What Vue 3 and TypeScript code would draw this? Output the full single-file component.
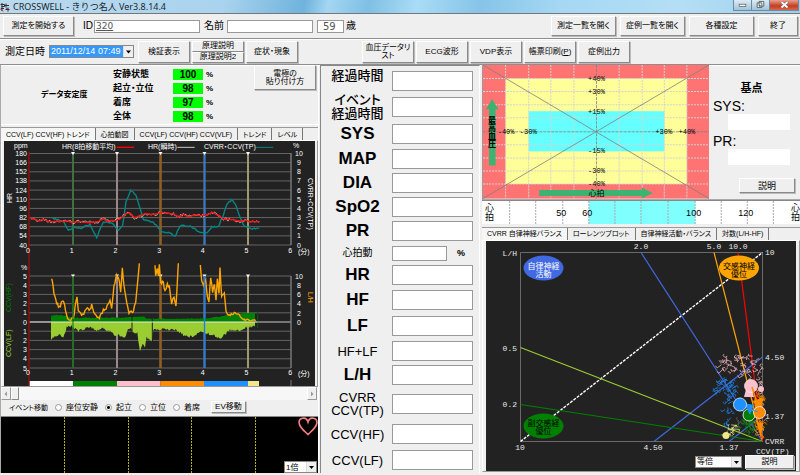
<script setup lang="ts">
import { ref } from 'vue'

type Point = [number, number]

interface Measure {
  label: string[]
  kind: string
  size?: string
  unit?: string
}

const seeded = (seed: number) => () => {
  seed = (seed * 1103515245 + 12345) % 2147483648
  return seed / 2147483648
}

// Parses "x,y x,y" anchors
const parse = (text: string): Point[] =>
  text.split(' ').map((pair) => pair.split(',').map(Number) as Point)

// Resamples a line at a fixed step and adds small measurement noise
const wiggle = (text: string, amp: number, step = 3, seed = 7): string => {
  const anchors = parse(text)
  const rand = seeded(seed)
  const out: string[] = []
  for (let i = 0; i < anchors.length - 1; i++) {
    const [x1, y1] = anchors[i]
    const [x2, y2] = anchors[i + 1]
    const n = Math.max(1, Math.round(Math.abs(x2 - x1) / step))
    for (let k = 0; k < n; k++) {
      const t = k / n
      const noise = (rand() - 0.5) * 2 * amp
      out.push(`${(x1 + (x2 - x1) * t).toFixed(1)},${(y1 + (y2 - y1) * t + noise).toFixed(1)}`)
    }
  }
  const last = anchors[anchors.length - 1]
  out.push(`${last[0]},${last[1]}`)
  return out.join(' ')
}

// Short zigzag strokes spread around a path, used for beat-by-beat scatter
const scatter = (text: string, spread: number, perLeg: number, seed: number): string => {
  const anchors = parse(text)
  const rand = seeded(seed)
  let d = ''
  for (let i = 0; i < anchors.length - 1; i++) {
    for (let k = 0; k < perLeg; k++) {
      const t = k / perLeg
      const x = anchors[i][0] + (anchors[i + 1][0] - anchors[i][0]) * t + (rand() - 0.5) * spread
      const y = anchors[i][1] + (anchors[i + 1][1] - anchors[i][1]) * t + (rand() - 0.5) * spread
      const dx = (rand() - 0.5) * 10
      const dy = (rand() - 0.5) * 8
      d += `M${x.toFixed(1)} ${y.toFixed(1)}l${dx.toFixed(1)} ${dy.toFixed(1)}l${(-dy / 2).toFixed(1)} ${(dx / 2).toFixed(1)}`
    }
  }
  return d
}

const patientId = ref('320')
const patientName = ref('')
const age = ref('59')
const position = ref('起立')
const positions = ['座位安静', '起立', '立位', '着席']

const stability = [
  { name: '安静状態', value: 100 },
  { name: '起立・立位', value: 98 },
  { name: '着席', value: 97 },
  { name: '全体', value: 98 },
]

const measures: Measure[] = [
  { label: ['経過時間'], kind: 'jp raised' },
  { label: ['イベント', '経過時間'], kind: 'jp', size: 'double' },
  { label: ['SYS'], kind: 'strong', size: 'roomy' },
  { label: ['MAP'], kind: 'strong' },
  { label: ['DIA'], kind: 'strong' },
  { label: ['SpO2'], kind: 'strong' },
  { label: ['PR'], kind: 'strong' },
  { label: ['心拍動'], kind: 'small', size: 'short', unit: '%' },
  { label: ['HR'], kind: 'strong' },
  { label: ['HF'], kind: 'strong', size: 'roomy' },
  { label: ['LF'], kind: 'strong', size: 'roomy' },
  { label: ['HF+LF'], kind: 'plain' },
  { label: ['L/H'], kind: 'strong' },
  { label: ['CVRR', 'CCV(TP)'], kind: 'plain', size: 'tall' },
  { label: ['CCV(HF)'], kind: 'plain', size: 'roomy' },
  { label: ['CCV(LF)'], kind: 'plain', size: 'roomy' },
]

const trendTabs = ['CCV(LF) CCV(HF) トレンド', '心拍動図', 'CCV(LF) CCV(HF) CCV(VLF)', 'トレンド', 'レベル']
const balanceTabs = ['CVRR 自律神経バランス', 'ローレンツプロット', '自律神経活動・バランス', '対数(L/H-HF)']

const steps = Array.from({ length: 11 }, (_, i) => i)
const minutes = [0, 1, 2, 3, 4, 5, 6]
const events = [
  { x: 73, color: '#0a6a0a', w: 1 },
  { x: 117, color: '#c09aa0', w: 1 },
  { x: 160.5, color: '#9a5a10', w: 2 },
  { x: 204.5, color: '#1e80f0', w: 1.4 },
  { x: 248, color: '#c8bc6c', w: 1 },
]
const phases = [
  { x: 29, w: 44, color: '#ffffff' },
  { x: 73, w: 44, color: '#008000' },
  { x: 117, w: 43.5, color: '#ffc0cb' },
  { x: 160.5, w: 43.5, color: '#ff8c00' },
  { x: 204, w: 44, color: '#1e90ff' },
  { x: 248, w: 11, color: '#f0e68c' },
]

const hrAnchors =
  '88,277 118,288 130,282 145,290 180,289 205,288 215,293 240,290 265,293 295,290 310,281 320,288 345,287 362,280 375,268 388,262 403,278 425,272 435,267 460,268 485,263 520,267 535,276 550,268 565,275 585,270 615,272 635,262 655,270 668,282 700,285 720,289 735,286 750,290 778,290'
const hrMean = wiggle(hrAnchors, 1.2, 4, 3)
const hrBeat = wiggle(hrAnchors, 5, 4, 11)
const cvrr = wiggle(
  '155,278 190,290 205,316 225,308 240,311 270,298 290,337 310,290 335,294 355,316 368,300 378,230 392,197 407,208 425,265 430,283 460,292 485,320 510,323 525,335 540,302 555,302 575,305 600,323 620,325 635,305 655,305 670,270 680,238 695,224 705,235 715,265 730,300 760,312 778,310',
  2, 4, 5,
)
const lhLines = [
  wiggle('155,85 157,95 162,130 170,160 178,172 190,150 200,195 205,208 212,212 220,205 225,175 231,140 235,180 245,198 258,180 262,172 270,178 275,165 285,195 298,205 310,180 318,175 325,165 330,150 335,172 342,105 350,75 358,90 362,128 367,55 372,105 380,160 387,186 400,182 407,160 411,120 418,40', 5, 3, 9),
  wiggle('465,50 467,75 472,55 475,80 478,42 482,95 490,100 495,125 502,105 508,110 515,160 522,140 528,168 535,40', 5, 3, 4),
  wiggle('601,48 605,90 610,110 617,90 622,140 627,152 632,80 638,130 643,100 648,150 652,90 657,130 660,55 665,140 673,130 678,185 685,195 700,190 715,192 730,210 745,208 767,212', 4, 3, 8),
]
const hfArea =
  '153,216 ' + wiggle('153,198 170,194 200,198 220,203 350,203 430,200 440,206 600,206 660,200 700,192 740,188 765,188', 1.5, 4, 2) + ' 765,216'
const lfArea =
  '153,216 ' + wiggle('153,270 158,262 180,255 190,262 200,232 215,228 235,245 245,238 270,232 290,240 310,235 330,245 345,255 375,260 385,238 395,238 398,245 412,250 420,305 428,285 435,292 440,262 455,278 460,238 530,240 550,255 580,262 600,245 640,255 660,265 690,240 720,242 735,232 765,230', 4, 3, 6) + ' 765,216'

const bpColumns = [505.5, 528.5, 550.5, 573.5, 618.5, 641.5, 663.5, 686]
const bpRows = [78.5, 91.5, 104.5, 117.5, 144.5, 157.5, 170.5, 183.5]
const bpLabels = [
  { x: 596, y: 80.5, t: '+40%' },
  { x: 596, y: 93.5, t: '+30%' },
  { x: 596, y: 113.5, t: '+15%' },
  { x: 596, y: 152.5, t: '-15%' },
  { x: 596, y: 172.5, t: '-30%' },
  { x: 596, y: 185.5, t: '-40%' },
  { x: 506, y: 133.5, t: '-40%' },
  { x: 528, y: 133.5, t: '-30%' },
  { x: 663, y: 133.5, t: '+30%' },
  { x: 686, y: 133.5, t: '+40%' },
]
const rateTicks = [509.5, 535.5, 562.5, 588.5, 614.5, 640.5, 667.5, 694.5, 720.5, 746.5, 772.5]
const rateLabels = [
  { x: 561, t: '50' },
  { x: 587, t: '60' },
  { x: 693, t: '100' },
  { x: 745, t: '120' },
]

const clouds = [
  { color: '#e8b0ba', d: scatter('719,363 728,358 724,370 742,371 748,375 734,358 750,359 759,366 760,380 761,392', 6, 7, 21) },
  { color: '#1e80e0', d: scatter('710,389 724,389 720,379 728,382 731,392 728,399 733,384 727,404 731,414 727,432', 6, 7, 33) },
  { color: '#606060', d: scatter('735,428 743,420 748,430 755,422', 6, 6, 12) },
  { color: '#008000', d: scatter('742,426 749,415 754,432 746,428 752,420', 6, 10, 45) },
  { color: '#ff8c00', d: scatter('757,404 761,396 758,412 760,424 761,436', 3, 16, 51) },
  { color: '#f0e68c', d: scatter('727,436 734,429 729,426', 4, 8, 63) },
  { color: '#e01010', d: scatter('753,398 758,402', 4, 4, 71) },
]
</script>

<template>
  <div class="window">
    <header class="titlebar">
      <svg class="app-icon" viewBox="0 0 10 10" aria-hidden="true">
        <path d="M0.5 2.5h4v2h-3M1 6.5h3M2 1v8M5 3.5h4M6 1.5v4M5.500 7.500h4M8 5.500v4" stroke="#333" fill="none" />
        <path d="M0 6.500l3 3M6 6l2 1" stroke="#d02020" />
      </svg>
      <h1>CROSSWELL - きりつ名人 Ver3.8.14.4</h1>
      <div class="caption-buttons">
        <button type="button" aria-label="最小化"><svg viewBox="0 0 18 10"><rect x="5.500" y="4.500" width="7" height="2.500" fill="#fff" stroke="#566" stroke-width=".8" /></svg></button>
        <button type="button" aria-label="元に戻す"><svg viewBox="0 0 18 10"><path d="M7.500 1.500h5v5h-5zM5.500 3h5v5h-5z" fill="#fff" stroke="#566" /><path d="M7.500 5h1.500v1.500h-1.500z" fill="#566" /></svg></button>
        <button type="button" class="close" aria-label="閉じる"><svg viewBox="0 0 28 10"><path d="M11.500 2l6 5.500M17.500 2l-6 5.500" stroke="#755" stroke-width="3" /><path d="M11.500 2l6 5.500M17.500 2l-6 5.500" stroke="#fff" stroke-width="1.800" /></svg></button>
      </div>
    </header>

    <div class="toolbar first">
      <button type="button" class="btn start">測定を開始する</button>
      <label class="field id">ID<input v-model="patientId" type="text" /></label>
      <label class="field name">名前<input v-model="patientName" type="text" /></label>
      <label class="field age"><input v-model="age" type="text" />歳</label>
      <div class="right-buttons">
        <button type="button" class="btn wide">測定一覧を開く</button>
        <button type="button" class="btn wide">症例一覧を開く</button>
        <button type="button" class="btn wide">各種設定</button>
        <button type="button" class="btn exit">終了</button>
      </div>
    </div>

    <div class="toolbar second">
      <label class="when" for="measured-at">測定日時</label>
      <span class="combo date">
        <select id="measured-at"><option>2011/12/14 07:49</option></select>
        <svg viewBox="0 0 9 9"><path d="M2 3.500h5L4.500 6.500z" /></svg>
      </span>
      <button type="button" class="btn tool">検証表示</button>
      <div class="stack">
        <button type="button" class="btn">原理説明</button>
        <button type="button" class="btn">原理説明2</button>
      </div>
      <button type="button" class="btn tool">症状・現象</button>
      <div class="reports">
        <button type="button" class="btn tool">血圧データリスト</button>
        <button type="button" class="btn tool">ECG波形</button>
        <button type="button" class="btn tool">VDP表示</button>
        <button type="button" class="btn tool">帳票印刷(<u>P</u>)</button>
        <button type="button" class="btn tool">症例出力</button>
      </div>
    </div>

    <main class="columns">
      <section class="left">
        <div class="stability">
          <h2>データ安定度</h2>
          <dl>
            <div v-for="s in stability" :key="s.name">
              <dt>{{ s.name }}</dt>
              <dd><b>{{ s.value }}</b><span>%</span></dd>
            </div>
          </dl>
          <button type="button" class="btn electrode">電極の<br />貼り付け方</button>
        </div>

        <div class="tabs" role="tablist">
          <button v-for="(t, i) in trendTabs" :key="t" type="button" role="tab" :aria-selected="i === 0">{{ t }}</button>
        </div>
        <div class="frame">
          <svg class="chart" viewBox="4 141 311 245" role="img" aria-label="トレンド">
            <rect x="4" y="141" width="311" height="245" fill="#222" />
            <g stroke="#646464">
              <line v-for="i in steps" :key="'u' + i" x1="29" x2="291" :y1="153.500 + i * 9.150" :y2="153.500 + i * 9.150" />
              <line v-for="i in steps" :key="'l' + i" x1="29" x2="291" :y1="276 + i * 9.200" :y2="276 + i * 9.200" />
            </g>
            <path d="M291 153V245M291 276V368" stroke="#777" stroke-width="1.500" />
            <path d="M291 380V386" stroke="#777" />
            <g v-for="e in events" :key="e.x">
              <path :d="`M${e.x} 153V245M${e.x} 276V368`" stroke="#777" stroke-width="2" />
              <path :d="`M${e.x} 153V245M${e.x} 276V368`" :stroke="e.color" :stroke-width="e.w" />
              <path :d="`M${e.x - 2} 152h4l-2 3zM${e.x - 2} 274.500h4l-2 3z`" fill="#fff" />
            </g>

            <g class="scaled" transform="translate(0 125) scale(.33333)">
              <polyline :points="cvrr" class="bold" stroke="#078484" />
              <polyline :points="hrBeat" stroke="#b8b8b8" />
              <polyline :points="hrMean" class="bold" stroke="#ff1010" />
              <path d="M350 67h52" class="bold" stroke="#f00" />
              <path d="M532 67h52" stroke="#c8c8c8" />
              <path d="M768 67h52" stroke="#078484" />
            </g>
            <g class="scaled" transform="translate(0 250) scale(.33333)">
              <polygon :points="hfArea" fill="#008000" />
              <polygon :points="lfArea" fill="#9acd32" />
              <path d="M396 200v45M457 205v72" stroke="#222" />
              <path d="M773 184v50" stroke="#0a5a0a" />
              <path d="M88 216h684" stroke="#e8e8e8" />
              <path d="M772 216h100" stroke="#aaa" />
              <polyline v-for="(l, i) in lhLines" :key="i" :points="l" stroke="#ffa500" class="bold" />
            </g>
            <path d="M73 276V368" stroke="#0a6a0a" />
            <path d="M204.500 276V368" stroke="#1e80f0" stroke-width="1.400" />
            <rect v-for="p in phases" :key="p.x" :x="p.x" y="381" :width="p.w" height="5" :fill="p.color" />
            <path d="M29 152V386" stroke="#8a1212" stroke-width="1.500" />

            <g class="tick">
              <text v-for="i in steps" :key="'a' + i" x="27" :y="156 + i * 9.150" text-anchor="end">{{ 180 - i * 14 }}</text>
              <text v-for="i in steps" :key="'b' + i" x="299" :y="156 + i * 9.150" text-anchor="middle">{{ 10 - i }}</text>
              <text v-for="i in steps" :key="'c' + i" x="27" :y="278.500 + i * 9.200" text-anchor="end">{{ Math.abs(5 - i) }}</text>
              <text v-for="i in 6" :key="'d' + i" x="299" :y="269.500 + i * 9.200" text-anchor="middle">{{ 12 - i * 2 }}</text>
              <g v-for="m in minutes" :key="'m' + m">
                <text :x="28 + m * 43.700" y="253" text-anchor="middle">{{ m }}</text>
                <text :x="28 + m * 43.700" y="375" text-anchor="middle">{{ m }}</text>
              </g>
              <text x="14" y="148">ppm</text>
              <text x="293" y="148">%</text>
              <text x="21" y="270">%</text>
              <text x="298" y="254">(分)</text>
              <text x="298" y="376">(分)</text>
              <text x="62" y="149">HR(8拍移動平均)</text>
              <text x="148" y="149">HR(瞬時)</text>
              <text x="204" y="149">CVRR・CCV(TP)</text>
              <text transform="translate(12 203) rotate(-90)">HR</text>
              <text transform="translate(308 178) rotate(90)">CVRR・CCV(TP)</text>
              <text transform="translate(11 312) rotate(-90)" class="hf">CCV(HF)</text>
              <text transform="translate(11 357) rotate(-90)" class="lf">CCV(LF)</text>
              <text transform="translate(308 292) rotate(90)" class="lh">L/H</text>
            </g>
          </svg>
        </div>
        <div class="scroll">
          <button type="button" aria-label="左へ"><svg viewBox="0 0 8 8"><path d="M5 1.500v5L2.500 4z" /></svg></button>
          <span class="thumb"></span>
          <button type="button" class="end" aria-label="右へ"><svg viewBox="0 0 8 8"><path d="M3 1.500v5L5.500 4z" /></svg></button>
        </div>
        <div class="event-row">
          <span class="caption">イベント移動</span>
          <label v-for="p in positions" :key="p"><input v-model="position" type="radio" name="position" :value="p" />{{ p }}</label>
          <button type="button" class="btn ev">EV移動</button>
        </div>
        <div class="monitor">
          <svg class="wave" viewBox="0 0 317 56" preserveAspectRatio="none" aria-hidden="true">
            <path d="M63.500 0V56M127.500 0V56M190.500 0V56M254.500 0V56" stroke="#b4b400" stroke-dasharray="2 1" />
          </svg>
          <svg class="heart" viewBox="0 0 20 19" aria-hidden="true">
            <path d="M10 5C9 1.500 6.500.8 4.500 1.200 1.800 1.700.8 4 1.200 6.500 2 11 7 14.500 10 17.500 13 14.500 18 11 18.800 6.500 19.200 4 18.200 1.700 15.500 1.200 13.500.8 11 1.500 10 5Z" fill="none" stroke="#f08080" stroke-width="1.600" />
          </svg>
          <span class="combo zoom">
            <select aria-label="倍率"><option>1倍</option></select>
            <svg viewBox="0 0 9 9"><path d="M2 3.500h5L4.500 6.500z" /></svg>
          </span>
        </div>
      </section>

      <section class="middle">
        <label v-for="m in measures" :key="m.label.join('')" :class="['measure', m.size]">
          <span :class="['caption-text', m.kind]"><span v-for="l in m.label" :key="l">{{ l }}</span></span>
          <input type="text" />
          <b v-if="m.unit">{{ m.unit }}</b>
        </label>
      </section>

      <section class="right">
        <div class="top-right">
          <svg class="bp" viewBox="483 65 225 133" role="img" aria-label="心拍と最高血圧">
            <rect x="483" y="65" width="225" height="133" fill="#ff7373" />
            <rect x="505.500" y="78.500" width="180.500" height="105" fill="#ffff99" />
            <rect x="528.500" y="111" width="135" height="40" fill="#66ffff" />
            <g stroke="#d3d3d3" stroke-dasharray="2 1">
              <line v-for="x in bpColumns" :key="x" :x1="x" :x2="x" y1="65" y2="198" />
              <line v-for="y in bpRows" :key="y" x1="483" x2="708" :y1="y" :y2="y" />
            </g>
            <path d="M483 65L708 198M708 65L483 198" stroke="#808080" stroke-width=".8" />
            <path d="M483 131.500H708M596 65V198" stroke="#808080" stroke-width=".8" stroke-dasharray="3 1" />
            <path d="M492 99L498.500 109H495.500V165H489V109H486Z" fill="#3cb371" />
            <path d="M539 189.500H641V187L652 192.500 641 198V195.500H539Z" fill="#3cb371" />
            <text v-for="l in bpLabels" :key="l.x + l.t" class="mono" :x="l.x" :y="l.y" text-anchor="middle">{{ l.t }}</text>
            <text class="jp-mark upright" x="492" y="116">最高血圧</text>
            <text class="jp-mark light" x="596" y="195" text-anchor="middle">心拍</text>
          </svg>
          <div class="basis">
            <h2>基点</h2>
            <label>SYS:<input type="text" /></label>
            <label>PR:<input type="text" /></label>
            <button type="button" class="btn explain">説明</button>
          </div>
        </div>

        <svg class="rate" viewBox="482 201 317 23" role="img" aria-label="心拍">
          <rect x="482" y="201" width="317" height="23" fill="#fff" />
          <rect x="588.500" y="201" width="106" height="23" fill="#80ffff" />
          <path v-for="x in rateTicks" :key="x" :d="`M${x} 201V224`" stroke="#aaa" stroke-dasharray="2 1" />
          <text v-for="l in rateLabels" :key="l.t" :x="l.x" y="215.500" text-anchor="middle">{{ l.t }}</text>
          <text class="upright" x="489" y="203">心拍</text>
          <text class="upright" x="794" y="203">心拍</text>
        </svg>

        <div class="tabs" role="tablist">
          <button v-for="(t, i) in balanceTabs" :key="t" type="button" role="tab" :aria-selected="i === 0">{{ t }}</button>
        </div>
        <div class="frame balance">
          <svg class="chart" viewBox="486 241 310 230" role="img" aria-label="自律神経バランス">
            <rect x="486" y="241" width="310" height="230" fill="#222" />
            <path d="M520.500 252.500H762.500V441.500H520.500Z" fill="none" stroke="#6a6a6a" />
            <g fill="none" stroke-width="1.200">
              <path d="M520.500 441.500L762.500 252.500" stroke="#fff" stroke-width="1.400" stroke-dasharray="3 1.200" />
              <path d="M641 252.500L762.500 441.500M654 441.500L762.500 357M729 441.500L762.500 415.500" stroke="#4068e0" />
              <path d="M520.500 347.500L762.500 441.500" stroke="#9acd32" />
              <path d="M520.500 404.500L762.500 441.500" stroke="#008000" />
              <path d="M714 252.500L762.500 441.500" stroke="#ffa500" />
              <path d="M738 252.500L762.500 441.500" stroke="#f00" />
              <path v-for="c in clouds" :key="c.color" :d="c.d" :stroke="c.color" stroke-width=".8" />
            </g>
            <path d="M749 378l-5 19h10z" fill="#ffc0cb" />
            <circle cx="761" cy="389" r="3" fill="#ffc0cb" />
            <path d="M754 401l8-3v10h-7zM757 423h6l-2 15z" fill="#ff8c00" />
            <circle cx="749" cy="415" r="6" fill="#008000" stroke="#ddd" />
            <path d="M744 403l10 2-4 10z" fill="#1e90ff" />
            <circle cx="740" cy="404.500" r="6.500" fill="#1e90ff" stroke="#bde" />
            <circle cx="751" cy="386" r="6.500" fill="#ffc0cb" stroke="#fff" stroke-width=".6" />
            <path d="M752 387l5 16" stroke="#ff8c00" stroke-width="1.500" />
            <circle cx="759.500" cy="412.500" r="6" fill="#ff8c00" stroke="#fdc" />
            <path d="M750 409l8 3" stroke="#1e90ff" />
            <circle cx="726" cy="435.500" r="3.500" fill="#f0e68c" />

            <ellipse cx="543.500" cy="268" rx="20" ry="12.500" fill="#4169e1" />
            <ellipse cx="739" cy="268" rx="20" ry="12.500" fill="#ffa500" />
            <ellipse cx="543.500" cy="426" rx="20" ry="12.500" fill="#008000" />
            <g class="bubble" text-anchor="middle">
              <text fill="#fff"><tspan x="543.500" y="269">自律神経</tspan><tspan x="543.500" y="277">活動</tspan></text>
              <text><tspan x="739" y="269">交感神経</tspan><tspan x="739" y="277">優位</tspan></text>
              <text><tspan x="543.500" y="426">副交感経</tspan><tspan x="543.500" y="434">優位</tspan></text>
            </g>
            <g class="axis">
              <text x="517" y="256" text-anchor="end">L/H</text>
              <text x="517" y="351" text-anchor="end">0.5</text>
              <text x="517" y="407" text-anchor="end">0.2</text>
              <text x="641" y="249" text-anchor="middle">2.0</text>
              <text x="714" y="249" text-anchor="middle">5.0</text>
              <text x="738" y="249" text-anchor="middle">10.0</text>
              <text x="765" y="255">10</text>
              <text x="765" y="360">4.50</text>
              <text x="765" y="419">1.37</text>
              <text x="765" y="444">CVRR</text>
              <text x="756" y="454">CCV(TP)</text>
              <text x="520" y="450" text-anchor="middle">10</text>
              <text x="653" y="450" text-anchor="middle">4.50</text>
              <text x="729" y="450" text-anchor="middle">1.37</text>
            </g>
          </svg>
          <div class="chart-controls">
            <span class="combo">
              <select aria-label="表示倍率"><option>等倍</option></select>
              <svg viewBox="0 0 9 9"><path d="M2 3.500h5L4.500 6.500z" /></svg>
            </span>
            <button type="button" class="btn">説明</button>
          </div>
        </div>
      </section>
    </main>
  </div>
</template>

<style>
body {
  margin: 0;
  background: #efefef;
}
</style>

<style scoped>
.window {
  background: #efefef;
  color: #000;
  font: 8px/9px "Liberation Sans", "Noto Sans CJK JP", sans-serif;
  font-feature-settings: "palt";
}
.window * { box-sizing: border-box; }
h1, h2, dl, dd { margin: 0; font-size: inherit; }
button, input, select {
  margin: 0;
  padding: 0;
  border: 0;
  border-radius: 0;
  font: inherit;
  font-feature-settings: inherit;
  color: inherit;
  appearance: none;
  min-width: 0;
}
svg { display: block; }

.titlebar {
  display: flex;
  align-items: center;
  height: 14px;
  padding-right: 1px;
  border-bottom: 1px solid #777;
  background: linear-gradient(100deg, #b9d9ee 0%, #a9d3ee 28%, #6fb3dd 38%, #a4d6f2 41%, #7fbfe4 46%, #a9dcf6 52%, #86c4e8 60%, #a5d8f4 70%, #b4def5 85%, #9fcfec 100%);
}
.app-icon { width: 10px; height: 10px; margin-right: 3px; }
h1 { font: 9px/12px "Noto Sans", "Noto Sans CJK JP", sans-serif; color: #1c2730; white-space: nowrap; }
.caption-buttons { display: flex; align-self: flex-start; margin-left: auto; height: 11px; border: 1px solid #6d8ba0; border-top: 0; }
.caption-buttons button { width: 18px; border-right: 1px solid #6d8ba0; background: linear-gradient(#dcebf5, #a3c3d8); }
.caption-buttons .close { width: 28px; border: 0; background: linear-gradient(#e6a090, #c43c22 60%, #d86a4a); }

.btn {
  background: #efefef;
  border: 1px solid;
  border-color: #fff #8a8a8a #8a8a8a #fff;
  box-shadow: 1px 1px 0 #bbb;
  text-align: center;
  line-height: 8px;
}

.toolbar { display: flex; align-items: center; border-bottom: 1px solid #8e8e8e; box-shadow: 0 1px 0 #fff; }
.first { height: 25px; padding: 0 2px 0 3px; }
.second { height: 26px; padding-left: 5px; }
.start { width: 71px; height: 20px; }
.field { display: flex; align-items: center; font-size: 10px; line-height: 12px; }
.field input { height: 13px; background: #fff; border: 1px solid #999; font: 9px/11px "DejaVu Sans", sans-serif; color: #555; padding: 0 1px; }
.id { margin-left: 9px; }
.id input { width: 106px; text-decoration: underline; margin-left: 1px; }
.name { margin-left: 4px; gap: 3px; }
.name input { width: 86px; }
.age { margin-left: 4px; gap: 2px; }
.field.age input { width: 27px; padding-left: 5px; font-size: 10px; }
.right-buttons { display: flex; gap: 4px; margin-left: auto; }
.right-buttons .btn { height: 20px; }
.wide { width: 65px; }
.exit { width: 40px; }
.when { font-size: 10px; margin-right: 4px; }

.combo { display: grid; grid-template-columns: 1fr 10px; background: #fff; border: 1px solid #888; }
.combo select { grid-area: 1 / 1 / 2 / 3; width: 100%; background: transparent; padding-left: 1px; }
.combo svg { grid-area: 1 / 2; width: 10px; height: 100%; background: #efefef; border-left: 1px solid #ddd; pointer-events: none; }
.date { width: 85px; height: 13px; margin-right: 4px; }
.date select { color: #fff; background: #3399ff; font-size: 9px; }

.tool { width: 52px; height: 22px; white-space: normal; }
.stack { display: flex; flex-direction: column; width: 52px; margin: 0 2px; }
.stack .btn { height: 11px; }
.reports { display: flex; gap: 2px; margin-left: 64px; }

.columns { display: grid; grid-template-columns: minmax(0, 319fr) minmax(0, 162fr) minmax(0, 319fr); }
.left { border-right: 1px solid #fff; border-left: 1px solid #aaa; }

.stability { display: flex; height: 60px; padding-left: 40px; border-bottom: 1px solid #fff; font-weight: bold; }
.stability h2 { width: 72px; align-self: center; }
.stability dl { display: flex; flex-direction: column; gap: 3px; padding-top: 4px; font-size: 9px; line-height: 11px; }
.stability dl div { display: flex; }
.stability dt { width: 60px; }
.stability dd { display: flex; gap: 3px; }
.stability dd b { width: 30px; background: #00ff00; text-align: center; font-size: 10px; }
.stability dd span { font-size: 8px; }
.electrode { width: 62px; height: 25px; margin: 0 2px 0 auto; font-weight: normal; }

.tabs { display: flex; align-items: stretch; height: 13px; margin-top: 2px; border-top: 1px solid #999; font-size: 7px; }
.tabs button { background: #efefef; padding: 0 5px; border-right: 1px solid #777; white-space: nowrap; line-height: 11px; }
.tabs button[aria-selected="true"] { background: #f6f6f6; }
.frame { border: 1px solid; border-color: #fff #999 #999 #fff; padding: 0 2px; }
.chart { width: 100%; height: auto; }
.chart text { font-family: "Liberation Sans", "Noto Sans CJK JP", sans-serif; }
.scaled polyline, .scaled path { fill: none; vector-effect: non-scaling-stroke; stroke-width: 1; }
.scaled .bold { stroke-width: 1.4; }
.tick { fill: #fff; font-size: 7px; }
.tick .hf { fill: #008000; }
.tick .lf { fill: #9acd32; }
.tick .lh { fill: #ffa500; }

.scroll { display: flex; height: 13px; background: #f7f7f7; }
.scroll button { width: 10px; background: #efefef; border: 1px solid; border-color: #fff #999 #999 #fff; }
.scroll svg path { fill: #999; }
.thumb { width: 8px; background: #efefef; border: 1px solid; border-color: #fff #888 #888 #fff; }
.scroll .end { margin-left: auto; margin-right: 1px; }

.event-row { display: flex; align-items: center; height: 16px; padding-left: 8px; gap: 7px; padding-bottom: 2px; }
.caption { font-size: 7px; white-space: nowrap; }
.event-row label { display: flex; align-items: center; gap: 4px; }
.event-row input { width: 7px; height: 7px; border: 1px solid #999; border-radius: 50%; background: #fff; }
.event-row input:checked { background: radial-gradient(#000 0 1px, #fff 2px); }
.ev { width: 35px; height: 12px; margin-left: 4px; }

.monitor { display: grid; grid-template: 44px 12px / 1fr 34px; background: #000; border-top: 1px solid #888; }
.wave { grid-area: 1 / 1 / 3 / 3; width: 100%; height: 56px; }
.heart { grid-area: 1 / 2; width: 20px; height: 19px; justify-self: end; }
.zoom { grid-area: 2 / 2; height: 12px; margin-right: 1px; }

.middle { border: 1px solid #888; border-bottom: 0; border-right-color: #fff; margin: 0 1px; padding: 3px 6px 0; }
.measure { display: grid; grid-template-columns: minmax(0, 1fr) 81px; align-items: center; height: 24px; }
.caption-text { display: flex; flex-direction: column; align-items: center; padding-right: 4px; }
.measure input { height: 20px; background: #fff; border: 1px solid #999; }
.measure.roomy { height: 26px; }
.measure.double { height: 28px; }
.measure.short { height: 20px; grid-template-columns: minmax(0, 1fr) 55px 26px; }
.measure.short input { height: 15px; }
.short b { padding-left: 10px; font-size: 9px; }
.measure.tall { height: 34px; }
.jp { font-size: 13px; line-height: 14px; font-weight: 500; }
.raised { align-self: start; }
.strong { font-size: 17px; line-height: 20px; font-weight: bold; }
.small { font-size: 10px; line-height: 12px; }
.plain { font-size: 13px; line-height: 13px; }

.right { padding-left: 1px; }
.right .tabs { margin-top: 3px; }
.top-right { display: grid; grid-template-columns: minmax(0, 226fr) minmax(0, 91fr); border-left: 1px solid #999; border-bottom: 1px solid #aaa; }
.bp { width: 100%; height: auto; }
.mono { font: 7px "Liberation Mono", monospace; }
.jp-mark { font: bold 8px "Noto Sans CJK JP", sans-serif; }
.jp-mark.light { font-weight: normal; }
.upright { writing-mode: vertical-rl; font-feature-settings: normal; }
.basis { display: flex; flex-direction: column; padding: 17px 10px 0 4px; }
.basis h2 { font-size: 11px; line-height: 13px; text-align: center; }
.basis label { display: flex; flex-direction: column; font: 14px/16px "Liberation Sans", sans-serif; padding-top: 3px; }
.basis input { align-self: flex-end; width: 62px; height: 16px; background: #fff; }
.basis .explain { width: 56px; height: 15px; margin: 13px -5px 0 auto; font-size: 9px; }

.rate { width: 100%; height: auto; border-top: 1px solid #888; }
.rate text { font: 9px "Liberation Sans", "Noto Sans CJK JP", sans-serif; }
.balance { display: grid; padding: 0 3px; }
.balance .chart { grid-area: 1 / 1; }
.chart-controls { grid-area: 1 / 1; align-self: end; justify-self: end; display: flex; align-items: center; gap: 3px; padding: 0 2px 2px 0; }
.chart-controls .combo { width: 47px; height: 12px; }
.chart-controls .btn { width: 49px; height: 14px; }
.bubble { font-size: 8px; }
.axis text { fill: #e8e8e8; font: 8px "Liberation Mono", monospace; }
</style>
